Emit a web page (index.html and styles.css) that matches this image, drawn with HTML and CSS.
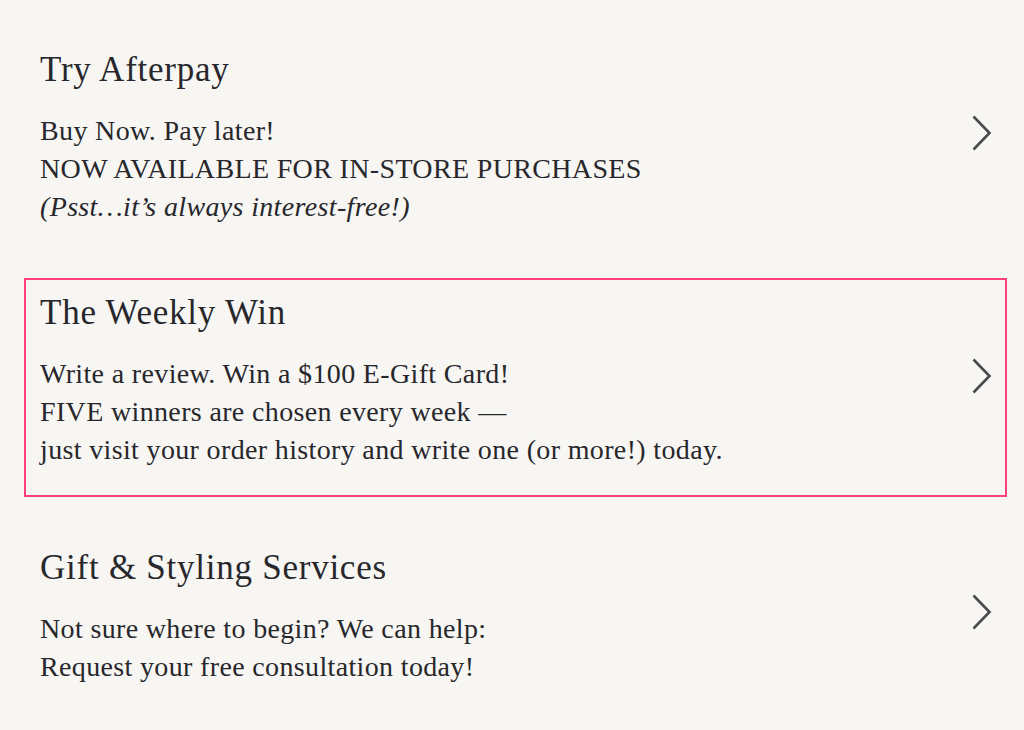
FILE: index.html
```html
<!DOCTYPE html>
<html lang="en">
<head>
<meta charset="utf-8">
<title>Offers</title>
<link rel="stylesheet" href="styles.css">
</head>
<body>
<ul class="list">
  <li class="item">
    <div class="text">
      <h2 class="title">Try Afterpay</h2>
      <p class="body">Buy Now. Pay later!<br>NOW AVAILABLE FOR IN-STORE PURCHASES<br><em>(Psst…it’s always interest-free!)</em></p>
    </div>
    <svg class="chev" viewBox="0 0 22 38" width="22" height="38"><path d="M2.5 2.5 L18.5 19 L2.5 35.5" fill="none" stroke="#4a4a4e" stroke-width="2.6"/></svg>
  </li>
  <li class="item active">
    <div class="text">
      <h2 class="title">The Weekly Win</h2>
      <p class="body">Write a review. Win a $100 E-Gift Card!<br>FIVE winners are chosen every week —<br>just visit your order history and write one (or more!) today.</p>
    </div>
    <svg class="chev" viewBox="0 0 22 38" width="22" height="38"><path d="M2.5 2.5 L18.5 19 L2.5 35.5" fill="none" stroke="#4a4a4e" stroke-width="2.6"/></svg>
  </li>
  <li class="item item-last">
    <div class="text">
      <h2 class="title">Gift &amp; Styling Services</h2>
      <p class="body">Not sure where to begin? We can help:<br>Request your free consultation today!</p>
    </div>
    <svg class="chev" viewBox="0 0 22 38" width="22" height="38"><path d="M2.5 2.5 L18.5 19 L2.5 35.5" fill="none" stroke="#4a4a4e" stroke-width="2.6"/></svg>
  </li>
</ul>
</body>
</html>
```
FILE: styles.css
```css
html, body {
  margin: 0;
  padding: 0;
  background: #f7f6f3;
}
body {
  font-family: "Liberation Serif", "Times New Roman", serif;
  color: #27272c;
  height: 730px;
  overflow: hidden;
}
.list {
  list-style: none;
  margin: 0;
  padding: 35px 17px 0 24px;
  display: flex;
  flex-direction: column;
}
.item {
  display: flex;
  align-items: center;
  justify-content: space-between;
  border: 2px solid transparent;
  padding: 13px 12px 26px 14px;
}
.item + .item {
  margin-top: 24px;
}
.item.item-last {
  margin-top: 36px;
}
.item.active {
  border-color: #ff3f7e;
}
.title {
  margin: 0 0 22px;
  font-size: 35px;
  letter-spacing: 0.75px;
  font-weight: normal;
  line-height: 40px;
}
.body {
  margin: 0;
  font-size: 28px;
  letter-spacing: 0.35px;
  line-height: 38px;
}
.chev {
  flex: none;
  margin-bottom: 10px;
}
```
